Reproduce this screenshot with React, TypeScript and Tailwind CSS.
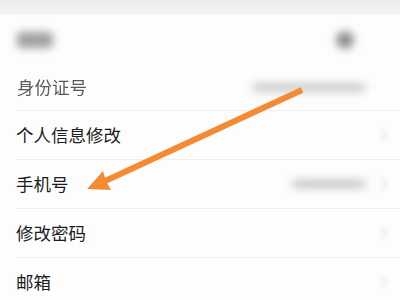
import React from "react";

const font = { fontFamily: '"Noto Sans CJK SC", "Noto Sans", sans-serif' };

function Chevron() {
  return (
    <svg width="8" height="14" viewBox="0 0 8 14" className="opacity-25 blur-[2px]">
      <path d="M1 1l6 6-6 6" fill="none" stroke="#aaa" strokeWidth="2" />
    </svg>
  );
}

function Row({ label, value, last }: { label: string; value?: number; last?: boolean }) {
  return (
    <div className="ml-[16px]">
      <div className="flex h-[48px] items-center justify-between pr-[12px]">
        <span className="text-[17.5px] text-[#1c1c1c]">{label}</span>
        <div className="flex items-center gap-[14px]">
          {value ? (
            <div className="h-[8px] rounded-full bg-[#c4c4c4] blur-[4px]" style={{ width: value }} />
          ) : null}
          <Chevron />
        </div>
      </div>
      {!last && <div className="h-px bg-[#efefef]" />}
    </div>
  );
}

export default function App() {
  return (
    <div className="relative h-[300px] w-[400px] overflow-hidden bg-[#fdfdfd]" style={font}>
      <div className="h-[15px] bg-gradient-to-b from-[#ececec] to-[#f6f6f6]" />
      <div className="flex h-[50px] items-center justify-between pl-[17px] pr-[46px]">
        <div className="h-[16px] w-[36px] rounded bg-[#a0a0a0] blur-[4px]" />
        <div className="h-[18px] w-[18px] rounded-full bg-[#8e8e8e] blur-[4px]" />
      </div>
      <div className="flex h-[45px] items-center justify-between pl-[17px] pr-[34px]">
        <span className="text-[17.5px] text-[#5a5a5a] blur-[0.5px]">身份证号</span>
        <div className="h-[9px] w-[114px] rounded-full bg-[#cccccc] blur-[4px]" />
      </div>
      <div className="ml-[16px] h-px bg-[#efefef]" />
      <Row label="个人信息修改" />
      <Row label="手机号" value={74} />
      <Row label="修改密码" />
      <Row label="邮箱" last />
      <svg className="absolute left-0 top-0" width="400" height="300">
        <line x1="302" y1="90" x2="104" y2="181.5" stroke="#f58a35" strokeWidth="6" />
        <polygon points="87,189 111,190 106,181 103,171" fill="#f58a35" />
      </svg>
    </div>
  );
}
